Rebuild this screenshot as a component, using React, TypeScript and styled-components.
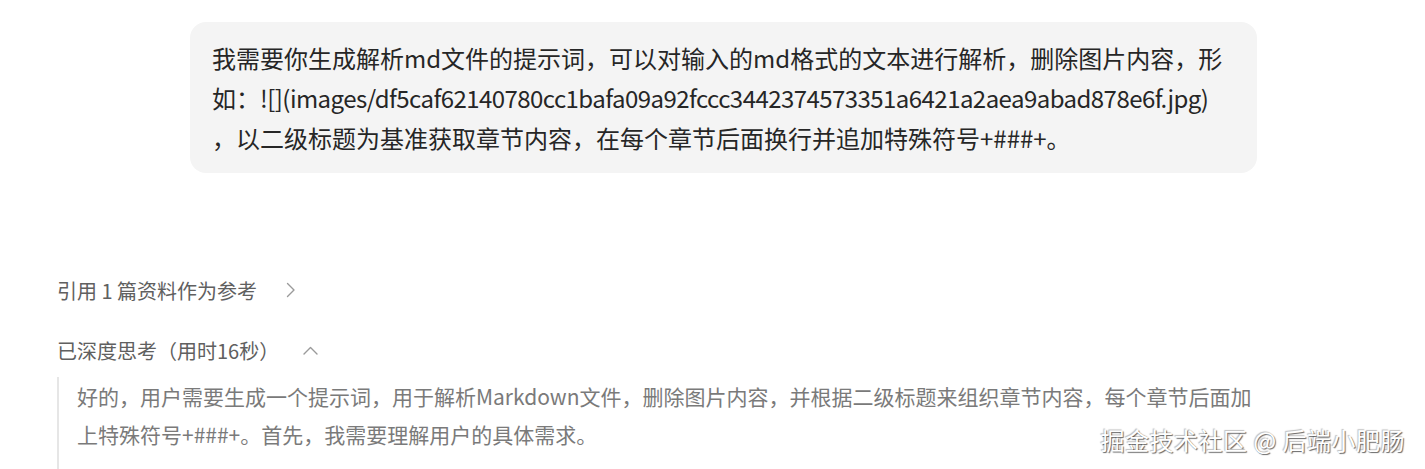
import styled, { createGlobalStyle } from "styled-components";

const GlobalStyle = createGlobalStyle`
  html, body {
    margin: 0;
    padding: 0;
    background: #fff;
  }
  body {
    font-family: "Noto Sans CJK SC", "Noto Sans", sans-serif;
    overflow: hidden;
  }
`;

export default function App() {
  return (
    <>
      <GlobalStyle />
      <Page>
        <Column>
          <UserRow>
            <Bubble>
              我需要你生成解析md文件的提示词，可以对输入的md格式的文本进行解析，删除图片内容，形如：
              <Code>![](images/df5caf62140780cc1bafa09a92fccc3442374573351a6421a2aea9abad878e6f.jpg)</Code>{" "}
              ，以二级标题为基准获取章节内容，在每个章节后面换行并追加特殊符号+###+。
            </Bubble>
          </UserRow>

          <Answer>
            <Toggle $gap={29}>
              引用 1 篇资料作为参考
              <ChevronIcon width="10" height="16" viewBox="0 0 10 16">
                <path d="M1.5 1.5 L8 8 L1.5 14.5" />
              </ChevronIcon>
            </Toggle>

            <Toggle $gap={24}>
              已深度思考（用时16秒）
              <ChevronIcon width="15" height="9" viewBox="0 0 15 9">
                <path d="M1 8 L7.5 1.5 L14 8" />
              </ChevronIcon>
            </Toggle>

            <Thinking>
              好的，用户需要生成一个提示词，用于解析Markdown文件，删除图片内容，并根据二级标题来组织章节内容，每个章节后面加上特殊符号+###+。首先，我需要理解用户的具体需求。
            </Thinking>
          </Answer>
        </Column>

        <Watermark>掘金技术社区 @ 后端小肥肠</Watermark>
      </Page>
    </>
  );
}

const Page = styled.div`
  position: relative;
  width: 1425px;
  height: 469px;
  overflow: hidden;
`;

const Column = styled.div`
  display: flex;
  flex-direction: column;
  width: 1200px;
  padding: 22px 0 0 57px;
`;

const UserRow = styled.div`
  display: flex;
  justify-content: flex-end;
`;

const Bubble = styled.div`
  width: 1067px;
  box-sizing: border-box;
  padding: 16px 34px 15px 22px;
  background: #f4f4f4;
  border-radius: 16px;
  font-size: 24px;
  line-height: 40px;
  color: #262626;
`;

const Code = styled.span`
  letter-spacing: -0.55px;
  white-space: nowrap;
`;

const Answer = styled.div`
  display: flex;
  flex-direction: column;
  margin-top: 102px;
`;

const Toggle = styled.div<{ $gap?: number }>`
  display: flex;
  align-items: center;
  gap: ${(p) => p.$gap ?? 20}px;
  height: 30px;
  margin-bottom: 30px;
  font-size: 20px;
  color: #606060;
`;

const ChevronIcon = styled.svg`
  fill: none;
  stroke: #9a9a9a;
  stroke-width: 1.4;
  stroke-linecap: round;
  stroke-linejoin: round;
`;

const Thinking = styled.div`
  margin-top: -18px;
  padding: 0 0 40px 18px;
  border-left: 2px solid #e6e6e6;
  font-size: 21px;
  line-height: 38px;
  color: #7a7a7a;
  width: 1190px;
`;

const Watermark = styled.div`
  position: absolute;
  right: 20px;
  bottom: 12px;
  font-size: 24px;
  color: #fff;
  letter-spacing: 0.5px;
  text-shadow: 1px 1px 1px rgba(0, 0, 0, 0.6), -1px -1px 1px rgba(0, 0, 0, 0.25);
`;
